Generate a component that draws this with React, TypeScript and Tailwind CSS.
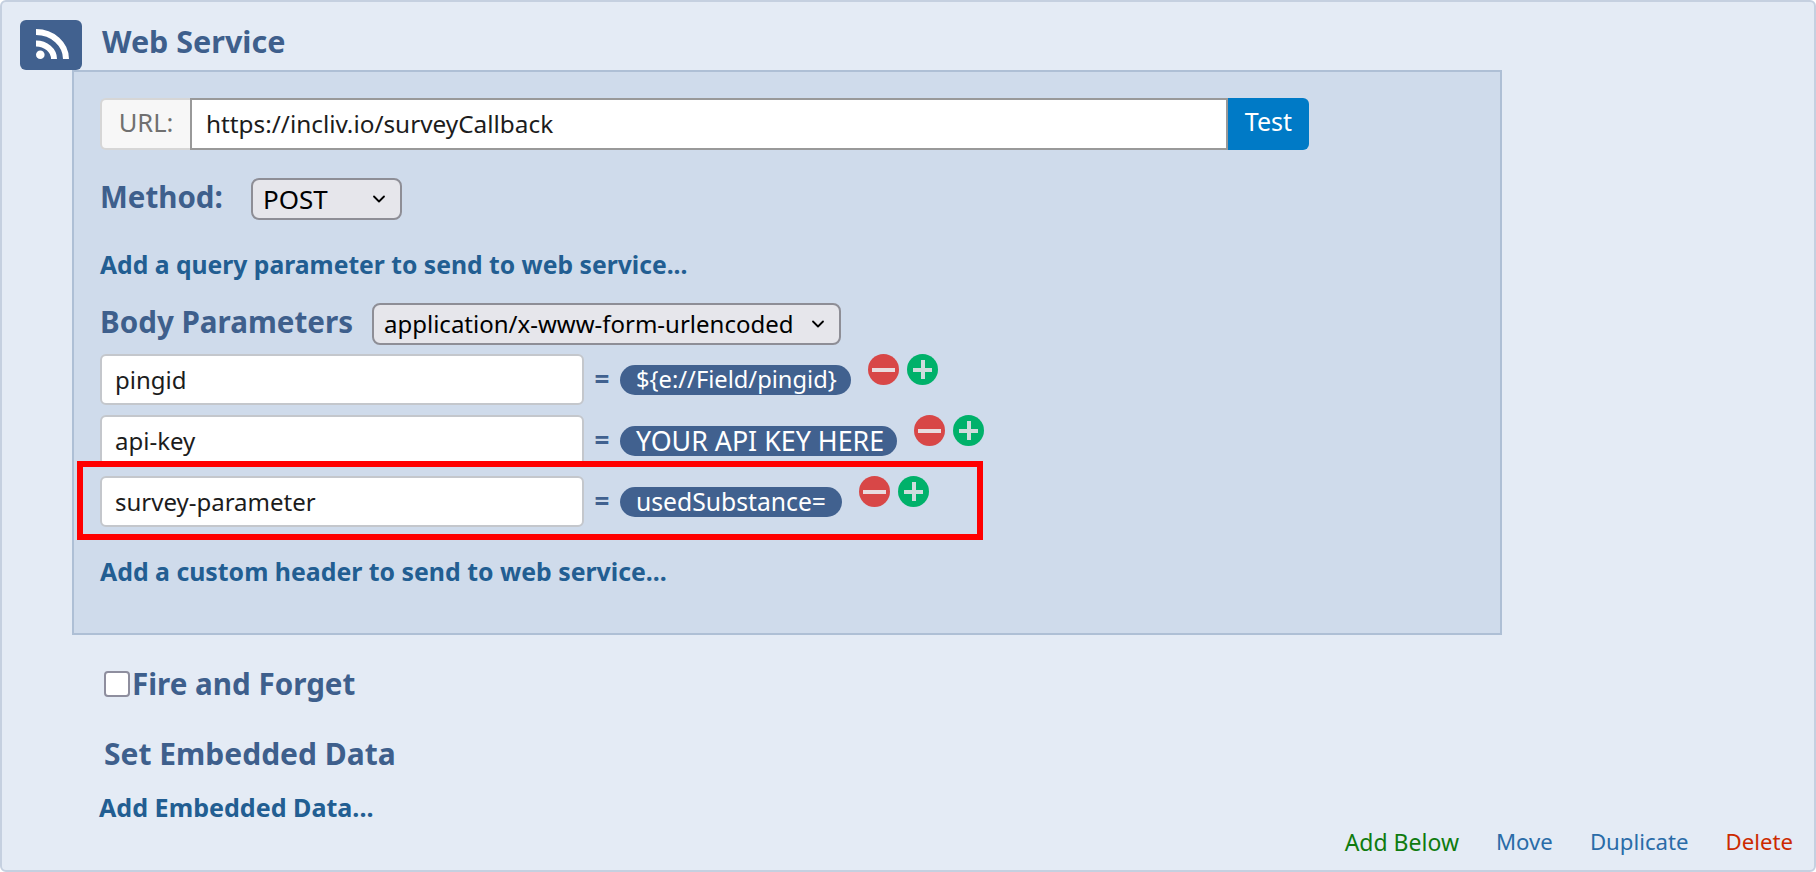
import { ChevronDown } from 'lucide-react'

interface BodyParam {
  name: string
  value: string
  pillClass: string
}

const params: BodyParam[] = [
  { name: 'pingid', value: '${e://Field/pingid}', pillClass: 'w-[231px] text-[23.7px]' },
  { name: 'api-key', value: 'YOUR API KEY HERE', pillClass: 'w-[277px] text-[26.8px]' },
  { name: 'survey-parameter', value: 'usedSubstance=', pillClass: 'w-[222px] text-[24.7px]' },
]

function RoundButton({ kind }: { kind: 'minus' | 'plus' }) {
  return (
    <span className={`relative block w-[31px] h-[31px] rounded-full ${kind === 'minus' ? 'bg-[#d84747]' : 'bg-[#00b16a]'}`}>
      {kind === 'minus' ? (
        <span className="absolute left-[4px] top-[13.5px] w-[23px] h-[4px] bg-[#e8dcdf]" />
      ) : (
        <>
          <span className="absolute left-[6px] top-[13.5px] w-[19px] h-[4px] bg-[#cfdcdc]" />
          <span className="absolute left-[13.5px] top-[6px] w-[4px] h-[19px] bg-[#cfdcdc]" />
        </>
      )}
    </span>
  )
}

function Param({ name, value, pillClass }: BodyParam) {
  return (
    <div className="flex items-start h-[51px]">
      <input
        readOnly
        defaultValue={name}
        className="w-[484px] h-[51px] rounded-[6px] border-2 border-[#c4c7cc] bg-white pl-[13px] text-[24px] text-[#1c1c1c] outline-none"
      />
      <span className="w-[36px] text-center text-[26px] leading-[51px] font-bold text-[#41618f]">=</span>
      <span className={`${pillClass} mt-[11px] h-[30px] rounded-[15px] bg-[#41618f] pl-[16px] leading-[29px] text-white whitespace-nowrap`}>
        {value}
      </span>
      <span className="flex gap-[8px] ml-[17px]">
        <RoundButton kind="minus" />
        <RoundButton kind="plus" />
      </span>
    </div>
  )
}

export default function App() {
  return (
    <div className="relative w-full h-screen overflow-hidden rounded-[6px] border-2 border-[#c5d0e0] bg-[#e4ebf5] font-['Noto_Sans','Open_Sans',sans-serif]">
      <div className="flex items-center h-[68px] pt-[18px] pl-[18px]">
        <span className="flex items-center justify-center w-[62px] h-[50px] rounded-[6px] bg-[#41618f] text-white">
          <svg viewBox="0 0 33 31" className="w-[33px] h-[31px] ml-[3px] -mt-[3px]" fill="none" stroke="currentColor" strokeWidth="6">
            <path d="M0 4 A30 27 0 0 1 30 31" />
            <path d="M0 15.5 A18 15.5 0 0 1 18 31" />
            <circle cx="4.3" cy="26.7" r="4.3" fill="currentColor" stroke="none" />
          </svg>
        </span>
        <h1 className="ml-[20px] text-[30.5px] font-bold text-[#3e5f8c] -mt-[6px]">Web Service</h1>
      </div>

      <div className="ml-[70px] w-[1430px] h-[565px] border-2 border-[#aebfd5] bg-[#cfdbeb] pl-[26px] pt-[26px]">
        <div className="flex h-[52px] w-[1209px]">
          <span className="w-[90px] rounded-l-[6px] border-2 border-r-0 border-[#d6d6d6] bg-[#f7f7f7] text-center text-[25.5px] leading-[44px] text-[#707070]">
            URL:
          </span>
          <input
            readOnly
            defaultValue="https://incliv.io/surveyCallback"
            className="flex-1 min-w-0 border-2 border-[#999999] bg-white pl-[14px] text-[24.35px] text-[#1c1c1c] outline-none"
          />
          <button className="w-[81px] rounded-r-[6px] bg-[#007ac6] text-[25px] pb-[4px] text-white">Test</button>
        </div>

        <div className="flex items-center mt-[28px] h-[42px]">
          <span className="w-[151px] -mt-[3px] text-[29.5px] font-bold text-[#3e5f8c]">Method:</span>
          <div className="flex items-center justify-between w-[151px] h-[42px] rounded-[8px] border-2 border-[#8e8e96] bg-[#e6e6eb] pl-[10px] pr-[11px] text-[26px] text-black">
            POST
            <ChevronDown className="w-[20px] h-[20px]" strokeWidth={2.2} />
          </div>
        </div>

        <a className="block mt-[29px] h-[32px] text-[24.7px] leading-[32px] font-bold text-[#225e92]">
          Add a query parameter to send to web service...
        </a>

        <div className="flex items-center mt-[22px] h-[42px]">
          <span className="w-[272px] -mt-[3px] text-[29.6px] font-bold text-[#3e5f8c] whitespace-nowrap">Body Parameters</span>
          <div className="flex items-center justify-between w-[469px] h-[42px] rounded-[8px] border-2 border-[#8e8e96] bg-[#e6e6eb] pl-[10px] pr-[11px] text-[24px] text-black">
            application/x-www-form-urlencoded
            <ChevronDown className="w-[20px] h-[20px]" strokeWidth={2.2} />
          </div>
        </div>

        <div className="mt-[9px] flex flex-col gap-[10px]">
          {params.map((p) => (
            <Param key={p.name} {...p} />
          ))}
        </div>

        <a className="block mt-[28px] h-[32px] text-[24.85px] leading-[32px] font-bold text-[#225e92]">
          Add a custom header to send to web service...
        </a>
      </div>

      <label className="flex items-center mt-[32px] ml-[102px] h-[34px]">
        <span className="w-[26px] h-[26px] rounded-[4px] border-2 border-[#8e8e9e] bg-white" />
        <span className="ml-[2px] text-[29.6px] font-bold text-[#3e5f8c]">Fire and Forget</span>
      </label>
      <h2 className="mt-[36px] ml-[102px] h-[34px] text-[30px] leading-[34px] font-bold text-[#3e5f8c]">Set Embedded Data</h2>
      <a className="block mt-[20px] ml-[97px] h-[32px] text-[25.1px] leading-[32px] font-bold text-[#225e92]">Add Embedded Data...</a>

      <div className="flex justify-end gap-[37px] pr-[21px] mt-[4px] text-[22.2px] leading-[30px]">
        <a className="text-[23px] text-[#0f7b0f]">Add Below</a>
        <a className="text-[#2a6ca8]">Move</a>
        <a className="text-[#2a6ca8]">Duplicate</a>
        <a className="text-[#cc2a00]">Delete</a>
      </div>

      <div className="absolute left-[75px] top-[459px] w-[906px] h-[79px] border-[6px] border-[#ff0000] pointer-events-none" />
    </div>
  )
}
